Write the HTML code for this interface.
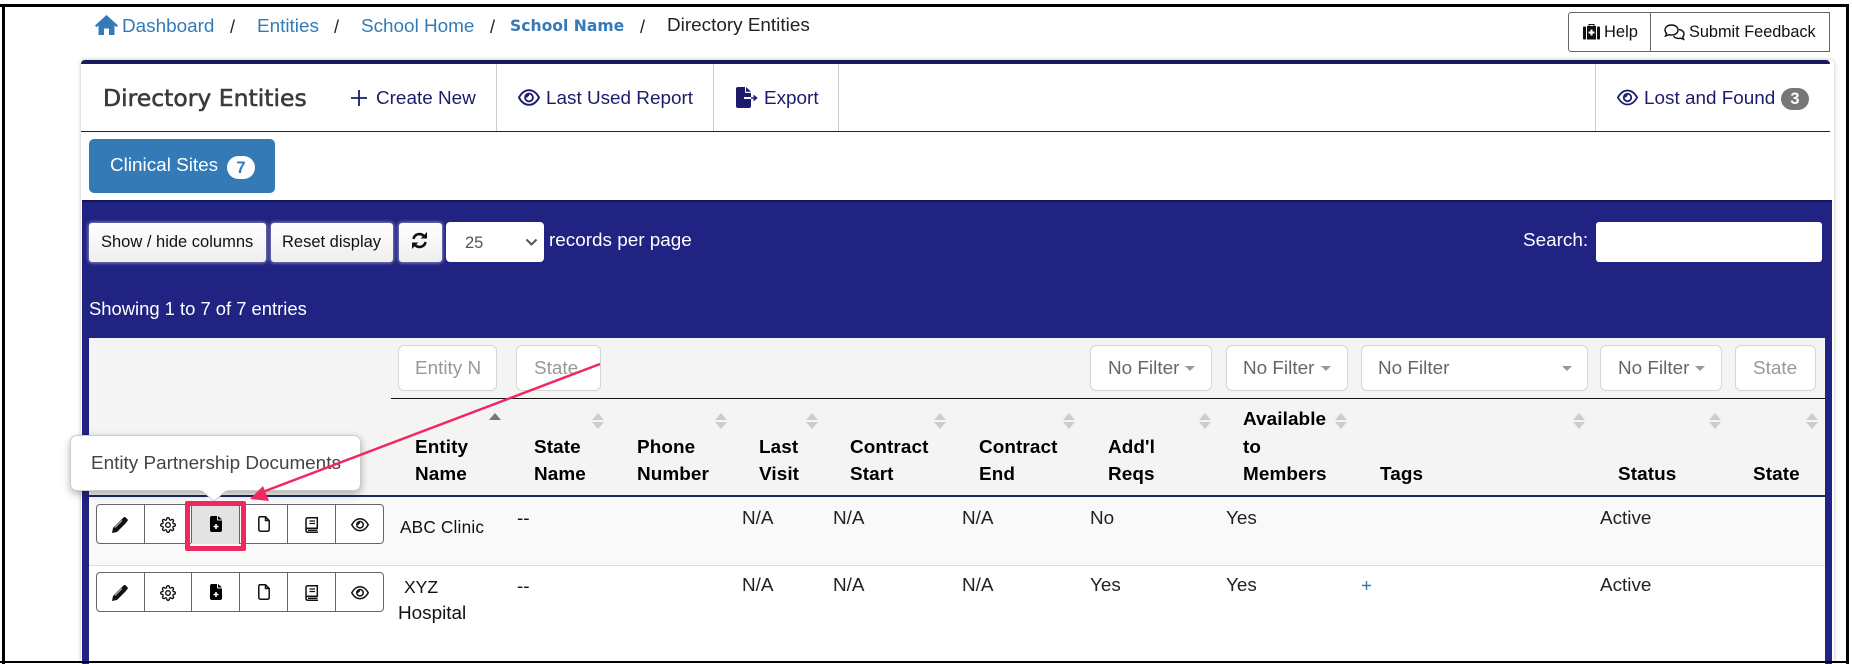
<!DOCTYPE html>
<html><head><meta charset="utf-8"><style>
html,body{margin:0;padding:0;background:#fff}
body{position:relative;width:1852px;height:664px;overflow:hidden;font-family:"Liberation Sans",sans-serif;font-size:18.9px;color:#222}
.a{position:absolute;box-sizing:border-box}
.t{position:absolute;white-space:nowrap;line-height:26px;height:26px}
.l{color:#337ab7}.n{color:#1b1b6b}.w{color:#fff}
.b{font-weight:bold;color:#000;letter-spacing:.1px}
.f{position:absolute;top:345px;height:46px;box-sizing:border-box;background:#fff;border:1px solid #d5d5d5;border-radius:6px}
.ph{color:#999}.nf{color:#666}
.car{position:absolute;width:0;height:0;border-left:5px solid transparent;border-right:5px solid transparent;border-top:5px solid #999;top:366px}
.su{position:absolute;width:0;height:0;border-left:6px solid transparent;border-right:6px solid transparent;border-bottom:7px solid #ccc;top:413px}
.sd{position:absolute;width:0;height:0;border-left:6px solid transparent;border-right:6px solid transparent;border-top:7px solid #ccc;top:422px}
.btn{position:absolute;top:223px;height:39px;box-sizing:border-box;background:linear-gradient(#fff,#eee);border-radius:3px;box-shadow:0 0 3px 1px rgba(255,255,255,.45);color:#111;font-size:16.5px;line-height:38px}
.g{position:absolute;left:96px;width:288px;height:40px;box-sizing:border-box;border:1px solid #666;border-radius:4px;background:#fff}
.d{position:absolute;top:0;bottom:0;width:1px;background:#666}
svg{position:absolute;display:block;overflow:visible}
</style></head><body>
<svg width="0" height="0" style="position:absolute"><defs>
<symbol id="eye" viewBox="0 0 24 18"><path d="M1 9C4 3.600 8 1 12 1s8 2.600 11 8c-3 5.400-7 8-11 8S4 14.400 1 9z" fill="none" stroke="currentColor" stroke-width="2"/><circle cx="12" cy="9" r="4.300" fill="none" stroke="currentColor" stroke-width="2"/><path d="M12 5.500a3.500 3.500 0 0 0-3.500 3.500h2A1.500 1.500 0 0 1 12 7.500z" fill="currentColor"/></symbol>
<symbol id="pen" viewBox="0 0 16 16"><path d="M0 16l1-5L10.500 1.500l4 4L5 15zM11.500.5q1-.9 2-.2l2 2q.8 1-.2 2L14.300 5.300l-3.800-3.800z" fill="#111"/><path d="M3 10.500l7-7" stroke="#fff" stroke-width=".8"/></symbol>
<symbol id="gear" viewBox="0 0 24 24"><circle cx="12" cy="12" r="3.500" fill="none" stroke="#111" stroke-width="2"/><path fill="none" stroke="#111" stroke-width="2" d="M19.400 15a1.650 1.650 0 0 0 .33 1.820l.06.06a2 2 0 0 1 0 2.830 2 2 0 0 1-2.830 0l-.06-.06a1.650 1.650 0 0 0-1.820-.33 1.650 1.650 0 0 0-1 1.510V21a2 2 0 0 1-2 2 2 2 0 0 1-2-2v-.09A1.650 1.650 0 0 0 9 19.400a1.650 1.650 0 0 0-1.820.33l-.06.06a2 2 0 0 1-2.830 0 2 2 0 0 1 0-2.830l.06-.06a1.650 1.650 0 0 0 .33-1.820 1.650 1.650 0 0 0-1.510-1H3a2 2 0 0 1-2-2 2 2 0 0 1 2-2h.09A1.650 1.650 0 0 0 4.600 9a1.650 1.650 0 0 0-.33-1.820l-.06-.06a2 2 0 0 1 0-2.830 2 2 0 0 1 2.830 0l.06.06a1.650 1.650 0 0 0 1.820.33H9a1.650 1.650 0 0 0 1-1.510V3a2 2 0 0 1 2-2 2 2 0 0 1 2 2v.09a1.650 1.650 0 0 0 1 1.510 1.650 1.650 0 0 0 1.820-.33l.06-.06a2 2 0 0 1 2.830 0 2 2 0 0 1 0 2.830l-.06.06a1.650 1.650 0 0 0-.33 1.820V9a1.650 1.650 0 0 0 1.510 1H21a2 2 0 0 1 2 2 2 2 0 0 1-2 2h-.09a1.650 1.650 0 0 0-1.510 1z"/></symbol>
<symbol id="fplus" viewBox="0 0 12 16"><path d="M2 0h5v3.500q0 1 1 1h4V14q0 2-2 2H2q-2 0-2-2V2q0-2 2-2zM8 0l4 3.500H8z" fill="#000"/><path d="M6 8v5M3.500 10.500h5" stroke="#fff" stroke-width="1.600"/></symbol>
<symbol id="file" viewBox="0 0 12 16"><path d="M2 .8h5.500L11.200 4.500V13.500q0 1.700-1.700 1.700H2.500Q.8 15.200.8 13.500V2.500Q.8.800 2 .8zM7.500.8v3.700h3.700" fill="none" stroke="#111" stroke-width="1.500"/></symbol>
<symbol id="book" viewBox="0 0 14 16"><path d="M3 .8h9.300v10.500H3Q1 11.300 1 13.200 1 15.200 3 15.200h10M1 13V2.800Q1 .8 3 .8M3 13.200h9.500" fill="none" stroke="#111" stroke-width="1.500"/><path d="M4.500 4h5.500M4.500 6.500h5.500" stroke="#111" stroke-width="1.300"/></symbol>
</defs></svg>

<!-- frame -->
<div class="a" style="left:0;top:4px;width:1849px;height:3px;background:#000"></div>
<div class="a" style="left:2px;top:4px;width:3px;height:660px;background:#000"></div>
<div class="a" style="left:1846px;top:4px;width:3px;height:660px;background:#000"></div>

<!-- breadcrumb -->
<svg style="left:95px;top:14px" width="23" height="21" viewBox="0 0 23 21"><path d="M11.500 1L23 11.500l-1.500 1.700L19.500 11.400V21h-5.500v-6.500H9V21H3.500V11.400L1.500 13.200 0 11.500z" fill="#337ab7"/></svg>
<div class="t l" style="left:122px;top:14px;font-size:18.9px">Dashboard</div>
<div class="t" style="left:230px;top:14px;font-size:18px">/</div>
<div class="t l" style="left:257px;top:14px;font-size:18.9px">Entities</div>
<div class="t" style="left:334px;top:14px;font-size:18px">/</div>
<div class="t l" style="left:361px;top:14px;font-size:18.9px">School Home</div>
<div class="t" style="left:490px;top:14px;font-size:18px">/</div>
<div class="t l" style="left:510px;top:13px;font-family:'DejaVu Sans',sans-serif;font-weight:bold;font-size:15.6px">School Name</div>
<div class="t" style="left:640px;top:14px;font-size:18px">/</div>
<div class="t" style="left:667px;top:13px;font-size:18.9px">Directory Entities</div>

<!-- help -->
<div class="a" style="left:1568px;top:12px;width:262px;height:40px;border:1px solid #666;border-radius:3px 0 0 3px;background:#fff"></div>
<div class="a" style="left:1650px;top:12px;width:1px;height:40px;background:#666"></div>
<svg style="left:1583px;top:23px" width="17" height="17" viewBox="0 0 17 17"><path d="M5.500 3V1h6v2H10.500V2h-4v1z" fill="#111"/><rect x="0" y="3.500" width="3" height="13" rx="1" fill="#111"/><rect x="14" y="3.500" width="3" height="13" rx="1" fill="#111"/><rect x="4" y="3" width="9" height="13.500" fill="#111"/><path d="M8.500 6.500v6M5.500 9.500h6" stroke="#fff" stroke-width="2"/></svg>
<div class="t" style="left:1604px;top:19px;font-size:16.5px;color:#111">Help</div>
<svg style="left:1664px;top:24px" width="21" height="16" viewBox="0 0 21 16"><path d="M7.500 1C3.500 1 1 3.300 1 6c0 1.400.7 2.600 1.700 3.500L1.500 12l3.500-1.300c.8.200 1.600.4 2.500.4 4 0 6.500-2.300 6.500-5.100S11.500 1 7.500 1z" fill="none" stroke="#111" stroke-width="1.400"/><path d="M15 5.500c2.800.5 5 2 5 4.500 0 1.200-.5 2.200-1.400 3l1 2.300-3.100-1.100c-2.500.7-5.500 0-7-2" fill="none" stroke="#111" stroke-width="1.400"/></svg>
<div class="t" style="left:1689px;top:19px;font-size:16.3px;color:#111">Submit Feedback</div>

<!-- card -->
<div class="a" style="left:81px;top:60px;width:1753px;height:604px;background:#fff;border-radius:4px 4px 0 0;box-shadow:0 0 4px rgba(0,0,0,.25)"></div>
<div class="a" style="left:81px;top:60px;width:1749px;height:4px;background:#1a1a5e;border-radius:4px 4px 0 0"></div>
<div class="a" style="left:81px;top:131px;width:1749px;height:1px;background:#1a1a5e"></div>
<div class="a" style="left:496px;top:64px;width:1px;height:67px;background:#ccc"></div>
<div class="a" style="left:713px;top:64px;width:1px;height:67px;background:#ccc"></div>
<div class="a" style="left:838px;top:64px;width:1px;height:67px;background:#ccc"></div>
<div class="a" style="left:1595px;top:64px;width:1px;height:67px;background:#ccc"></div>
<div class="t" style="left:103px;top:83px;height:30px;line-height:30px;font-family:'DejaVu Sans',sans-serif;font-size:23.5px;color:#3a3a3a;-webkit-text-stroke:.55px #3a3a3a">Directory Entities</div>
<svg style="left:351px;top:90px" width="16" height="16"><path d="M8 0v16M0 8h16" stroke="#1b1b6b" stroke-width="1.800"/></svg>
<div class="t n" style="left:376px;top:86px">Create New</div>
<svg class="n" style="left:518px;top:89px;color:#1b1b6b" width="22" height="17"><use href="#eye"/></svg>
<div class="t n" style="left:546px;top:86px">Last Used Report</div>
<svg style="left:736px;top:87px" width="21" height="21" viewBox="0 0 21 21"><path d="M2 0h7v5q0 1 1 1h5V19q0 2-2 2H2q-2 0-2-2V2q0-2 2-2zM10 0l5 4.800h-5z" fill="#1b1b6b"/><path d="M8 11h7.500" stroke="#fff" stroke-width="2"/><path d="M15 11h5M17.500 8.500L20.500 11l-3 2.500" fill="none" stroke="#1b1b6b" stroke-width="1.500"/></svg>
<div class="t n" style="left:764px;top:86px">Export</div>
<svg style="left:1617px;top:89px;color:#1b1b6b" width="21" height="17"><use href="#eye"/></svg>
<div class="t n" style="left:1644px;top:86px">Lost and Found</div>
<div class="a" style="left:1781px;top:88px;width:28px;height:22px;border-radius:11px;background:#777;color:#fff;font-weight:bold;font-size:16.5px;text-align:center;line-height:23px">3</div>

<div class="a" style="left:89px;top:139px;width:186px;height:54px;background:#337ab7;border-radius:5px"></div>
<div class="t w" style="left:110px;top:153px">Clinical Sites</div>
<div class="a" style="left:227px;top:156px;width:28px;height:23px;border-radius:12px;background:#fff;color:#337ab7;font-weight:bold;font-size:16.5px;text-align:center;line-height:24px">7</div>

<!-- blue panel -->
<div class="a" style="left:82px;top:200px;width:1750px;height:464px;background:#202382"></div>
<div class="a" style="left:82px;top:200px;width:1750px;height:2px;background:#15175e"></div>
<div class="btn" style="left:89px;width:177px;padding-left:12px">Show / hide columns</div>
<div class="btn" style="left:271px;width:122px;padding-left:11px">Reset display</div>
<div class="btn" style="left:399px;width:43px"></div>
<svg style="left:411px;top:232px" width="17" height="17" viewBox="0 0 17 17"><path d="M2.500 7A6 6 0 0 1 13 4.200M14.500 10A6 6 0 0 1 4 12.800" fill="none" stroke="#111" stroke-width="2.600"/><path d="M16 0v6.500h-6.300zM1 17v-6.500h6.300z" fill="#111"/></svg>
<div class="a" style="left:446px;top:222px;width:98px;height:40px;background:#fff;border-radius:4px"></div>
<div class="t" style="left:465px;top:230px;font-size:16.5px;color:#555">25</div>
<svg style="left:525px;top:238px" width="13" height="9"><path d="M1.500 1.500L6.500 6.500 11.500 1.500" fill="none" stroke="#555" stroke-width="2"/></svg>
<div class="t w" style="left:549px;top:228px">records per page</div>
<div class="t w" style="left:1523px;top:228px">Search:</div>
<div class="a" style="left:1596px;top:222px;width:226px;height:40px;background:#fff;border-radius:3px"></div>
<div class="t w" style="left:89px;top:296px;font-size:18.4px">Showing 1 to 7 of 7 entries</div>

<!-- table -->
<div class="a" style="left:89px;top:338px;width:1736px;height:157px;background:#f4f4f4"></div>
<div class="a" style="left:89px;top:497px;width:1736px;height:68px;background:#f9f9f9"></div>
<div class="a" style="left:89px;top:565px;width:1736px;height:96px;background:#fff"></div>
<div class="a" style="left:89px;top:663px;width:1736px;height:1px;background:#fff"></div>
<div class="a" style="left:391px;top:398px;width:1434px;height:1px;background:#111"></div>
<div class="a" style="left:89px;top:495px;width:1736px;height:2px;background:#1e2a5e"></div>
<div class="a" style="left:89px;top:565px;width:1736px;height:1px;background:#ddd"></div>

<div class="f" style="left:398px;width:99px"></div><div class="t ph" style="left:415px;top:356px">Entity N</div>
<div class="f" style="left:516px;width:85px"></div><div class="t ph" style="left:534px;top:356px">State</div>
<div class="f" style="left:1090px;width:122px"></div><div class="t nf" style="left:1108px;top:356px">No Filter</div><div class="car" style="left:1185px"></div>
<div class="f" style="left:1226px;width:122px"></div><div class="t nf" style="left:1243px;top:356px">No Filter</div><div class="car" style="left:1321px"></div>
<div class="f" style="left:1361px;width:227px"></div><div class="t nf" style="left:1378px;top:356px">No Filter</div><div class="car" style="left:1562px"></div>
<div class="f" style="left:1600px;width:122px"></div><div class="t nf" style="left:1618px;top:356px">No Filter</div><div class="car" style="left:1695px"></div>
<div class="f" style="left:1735px;width:81px"></div><div class="t ph" style="left:1753px;top:356px">State</div>

<div class="su" style="left:489px;border-bottom-color:#777"></div>
<div class="su" style="left:592px"></div><div class="sd" style="left:592px"></div>
<div class="su" style="left:715px"></div><div class="sd" style="left:715px"></div>
<div class="su" style="left:806px"></div><div class="sd" style="left:806px"></div>
<div class="su" style="left:934px"></div><div class="sd" style="left:934px"></div>
<div class="su" style="left:1063px"></div><div class="sd" style="left:1063px"></div>
<div class="su" style="left:1199px"></div><div class="sd" style="left:1199px"></div>
<div class="su" style="left:1335px"></div><div class="sd" style="left:1335px"></div>
<div class="su" style="left:1573px"></div><div class="sd" style="left:1573px"></div>
<div class="su" style="left:1709px"></div><div class="sd" style="left:1709px"></div>
<div class="su" style="left:1806px"></div><div class="sd" style="left:1806px"></div>

<div class="t b" style="left:415px;top:435px">Entity</div><div class="t b" style="left:415px;top:462px">Name</div>
<div class="t b" style="left:534px;top:435px">State</div><div class="t b" style="left:534px;top:462px">Name</div>
<div class="t b" style="left:637px;top:435px">Phone</div><div class="t b" style="left:637px;top:462px">Number</div>
<div class="t b" style="left:759px;top:435px">Last</div><div class="t b" style="left:759px;top:462px">Visit</div>
<div class="t b" style="left:850px;top:435px">Contract</div><div class="t b" style="left:850px;top:462px">Start</div>
<div class="t b" style="left:979px;top:435px">Contract</div><div class="t b" style="left:979px;top:462px">End</div>
<div class="t b" style="left:1108px;top:435px">Add'l</div><div class="t b" style="left:1108px;top:462px">Reqs</div>
<div class="t b" style="left:1243px;top:407px">Available</div><div class="t b" style="left:1243px;top:435px">to</div><div class="t b" style="left:1243px;top:462px">Members</div>
<div class="t b" style="left:1380px;top:462px">Tags</div>
<div class="t b" style="left:1618px;top:462px">Status</div>
<div class="t b" style="left:1753px;top:462px">State</div>

<!-- row 1 -->
<div class="t" style="left:400px;top:514px;font-size:17.2px;letter-spacing:.2px;color:#111">ABC Clinic</div>
<div class="t" style="left:517px;top:506px;color:#111">--</div>
<div class="t" style="left:742px;top:506px">N/A</div><div class="t" style="left:833px;top:506px">N/A</div><div class="t" style="left:962px;top:506px">N/A</div>
<div class="t" style="left:1090px;top:506px">No</div><div class="t" style="left:1226px;top:506px">Yes</div><div class="t" style="left:1600px;top:506px">Active</div>
<!-- row 2 -->
<div class="t" style="left:404px;top:574px;font-size:17.5px;color:#111">XYZ</div>
<div class="t" style="left:398px;top:601px;color:#111">Hospital</div>
<div class="t" style="left:517px;top:574px;color:#111">--</div>
<div class="t" style="left:742px;top:573px">N/A</div><div class="t" style="left:833px;top:573px">N/A</div><div class="t" style="left:962px;top:573px">N/A</div>
<div class="t" style="left:1090px;top:573px">Yes</div><div class="t" style="left:1226px;top:573px">Yes</div><div class="t" style="left:1600px;top:573px">Active</div>
<svg style="left:1362px;top:581px" width="9" height="9"><path d="M4.500 0v9M0 4.500h9" stroke="#337ab7" stroke-width="1.400"/></svg>

<!-- button groups -->
<div class="g" style="top:504px"><div class="a" style="left:94px;top:-1px;width:48px;height:40px;background:#e3e3e3"></div><div class="d" style="left:47px"></div><div class="d" style="left:94px"></div><div class="d" style="left:142px"></div><div class="d" style="left:190px"></div><div class="d" style="left:238px"></div></div>
<div class="g" style="top:572px"><div class="d" style="left:47px"></div><div class="d" style="left:94px"></div><div class="d" style="left:142px"></div><div class="d" style="left:190px"></div><div class="d" style="left:238px"></div></div>
<svg style="left:112px;top:517px" width="16" height="16"><use href="#pen"/></svg>
<svg style="left:160px;top:517px" width="16" height="16"><use href="#gear"/></svg>
<svg style="left:210px;top:516px" width="12" height="16"><use href="#fplus"/></svg>
<svg style="left:258px;top:516px" width="12" height="16"><use href="#file"/></svg>
<svg style="left:305px;top:517px" width="14" height="16"><use href="#book"/></svg>
<svg style="left:351px;top:518px;color:#111" width="18" height="13.500"><use href="#eye"/></svg>
<svg style="left:112px;top:585px" width="16" height="16"><use href="#pen"/></svg>
<svg style="left:160px;top:585px" width="16" height="16"><use href="#gear"/></svg>
<svg style="left:210px;top:584px" width="12" height="16"><use href="#fplus"/></svg>
<svg style="left:258px;top:584px" width="12" height="16"><use href="#file"/></svg>
<svg style="left:305px;top:585px" width="14" height="16"><use href="#book"/></svg>
<svg style="left:351px;top:586px;color:#111" width="18" height="13.500"><use href="#eye"/></svg>

<!-- tooltip -->
<div class="a" style="left:70px;top:435px;width:291px;height:56px;background:#fff;border:1px solid #ccc;border-radius:7px;box-shadow:0 3px 8px rgba(0,0,0,.3)"></div>
<svg style="left:200px;top:489px" width="28" height="13"><path d="M1 1L14 12 27 1" fill="#fff" stroke="#ccc"/><path d="M0 0h28v1.500H0z" fill="#fff"/></svg>
<div class="t" style="left:91px;top:451px;font-size:18.9px;color:#444">Entity Partnership Documents</div>

<!-- annotations -->
<div class="a" style="left:185px;top:501px;width:61px;height:50px;border:5px solid #f0285f;border-radius:2px"></div>
<svg style="left:0;top:0" width="1852" height="664"><path d="M600 364L260 493" stroke="#f0285f" stroke-width="2.500" fill="none"/><path d="M250 499L263 486 269 501z" fill="#f0285f"/></svg>

<!-- bottom frame -->
<div class="a" style="left:0;top:661px;width:1849px;height:2px;background:#000"></div>
</body></html>
